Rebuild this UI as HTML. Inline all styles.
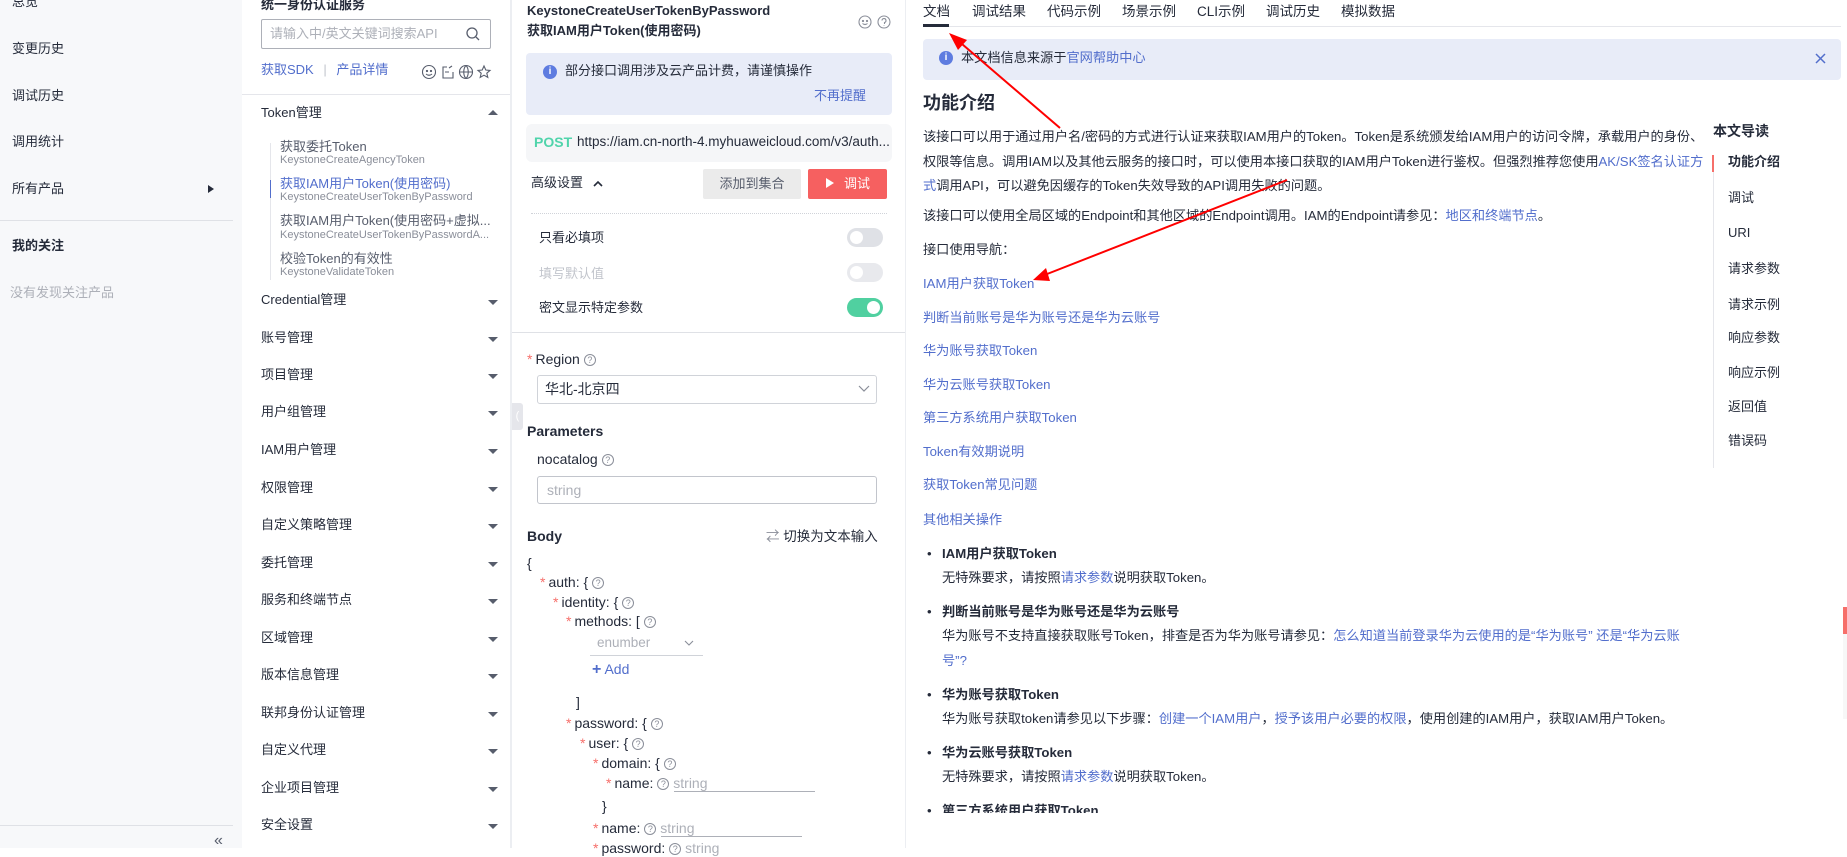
<!DOCTYPE html>
<html><head><meta charset="utf-8">
<style>
*{margin:0;padding:0;box-sizing:border-box}
body{width:1847px;height:848px;overflow:hidden;position:relative;background:#fff;font-family:"Liberation Sans","Noto Sans CJK SC",sans-serif;font-size:13px;color:#252b3a;line-height:18px}
.a{position:absolute;white-space:nowrap}
.b{color:#526ecc}
.g{color:#8a8e99}
.d{font-size:13.2px}
.tri{position:absolute;width:0;height:0;border-left:5px solid transparent;border-right:5px solid transparent;border-top:5px solid #575d6c}
.q{display:inline-block;width:12px;height:12px;border:1px solid #8a8e99;border-radius:50%;font-size:9px;line-height:10px;text-align:center;color:#8a8e99;vertical-align:middle;margin-left:4px}
.st{color:#f66f6a;margin-right:3px}
.tog{position:absolute;width:36px;height:19px;border-radius:10px;background:#dfe1e6}
.tog i{position:absolute;top:3px;left:3px;width:13px;height:13px;border-radius:50%;background:#fff}
</style></head><body>

<!-- left nav -->
<div class="a" style="left:0;top:0;width:242px;height:848px;background:#f7f8fa"></div>
<div class="a" style="left:12px;top:-7px">总览</div>
<div class="a" style="left:12px;top:40px">变更历史</div>
<div class="a" style="left:12px;top:87px">调试历史</div>
<div class="a" style="left:12px;top:133px">调用统计</div>
<div class="a" style="left:12px;top:180px">所有产品</div>
<div class="a" style="left:208px;top:185px;width:0;height:0;border-top:4px solid transparent;border-bottom:4px solid transparent;border-left:6px solid #252b3a"></div>
<div class="a" style="left:0;top:220px;width:233px;height:1px;background:#dfe1e6"></div>
<div class="a" style="left:12px;top:237px;font-weight:bold">我的关注</div>
<div class="a g" style="left:10px;top:284px;color:#adb0b8">没有发现关注产品</div>
<div class="a" style="left:0;top:825px;width:233px;height:1px;background:#dfe1e6"></div>
<div class="a" style="left:214px;top:832px;color:#575d6c;font-size:16px">«</div>

<!-- product column -->
<div class="a" style="left:261px;top:-4px;font-weight:bold">统一身份认证服务</div>
<div class="a" style="left:261px;top:19px;width:230px;height:30px;border:1px solid #adb0b8;border-radius:2px"></div>
<div class="a" style="left:270px;top:25px;color:#adb0b8">请输入中/英文关键词搜索API</div>
<svg class="a" style="left:466px;top:27px" width="14" height="14"><circle cx="6" cy="6" r="5" fill="none" stroke="#575d6c" stroke-width="1.3"/><line x1="10" y1="10" x2="13" y2="13" stroke="#575d6c" stroke-width="1.3"/></svg>
<div class="a b" style="left:261px;top:61px">获取SDK <span style="color:#c0c4cc;margin:0 6px">|</span> 产品详情</div>
<svg class="a" style="left:421px;top:64px" width="72" height="16" fill="none" stroke="#575d6c" stroke-width="1.1"><circle cx="8" cy="8" r="6.5"/><circle cx="6" cy="7" r=".6"/><circle cx="10" cy="7" r=".6"/><path d="M5 10q3 2.5 6 0"/><path d="M26 3h-4v11h10v-6M24 8h4M28 4l3-2"/><circle cx="45" cy="8" r="6.5"/><path d="M38.5 8h13M45 1.5c-3 3-3 10 0 13M45 1.5c3 3 3 10 0 13"/><path d="M63 2l1.8 4 4.2.4-3.2 2.8 1 4.2-3.8-2.2-3.8 2.2 1-4.2-3.2-2.8 4.2-.4z"/></svg>
<div class="a" style="left:242px;top:94px;width:268px;height:1px;background:#e5e6eb"></div>
<div class="a" style="left:261px;top:104px">Token管理</div>
<div class="a" style="left:488px;top:110px;width:0;height:0;border-left:5px solid transparent;border-right:5px solid transparent;border-bottom:5px solid #575d6c"></div>
<div class="a" style="left:270px;top:143px;width:1px;height:137px;background:#e5e6eb"></div>
<div class="a" style="left:270px;top:180px;width:1px;height:18px;background:#526ecc"></div>
<div class="a" style="left:280px;top:138px;color:#575d6c">获取委托Token</div>
<div class="a g" style="left:280px;top:153px;font-size:11px;line-height:14px">KeystoneCreateAgencyToken</div>
<div class="a b" style="left:280px;top:175px">获取IAM用户Token(使用密码)</div>
<div class="a g" style="left:280px;top:190px;font-size:11px;line-height:14px">KeystoneCreateUserTokenByPassword</div>
<div class="a" style="left:280px;top:212px;color:#575d6c">获取IAM用户Token(使用密码+虚拟...</div>
<div class="a g" style="left:280px;top:228px;font-size:11px;line-height:14px">KeystoneCreateUserTokenByPasswordA...</div>
<div class="a" style="left:280px;top:250px;color:#575d6c">校验Token的有效性</div>
<div class="a g" style="left:280px;top:265px;font-size:11px;line-height:14px">KeystoneValidateToken</div>

<div class="a" style="left:261px;top:291px">Credential管理</div><div class="tri" style="left:488px;top:300px"></div>
<div class="a" style="left:261px;top:329px">账号管理</div><div class="tri" style="left:488px;top:337px"></div>
<div class="a" style="left:261px;top:366px">项目管理</div><div class="tri" style="left:488px;top:374px"></div>
<div class="a" style="left:261px;top:403px">用户组管理</div><div class="tri" style="left:488px;top:411px"></div>
<div class="a" style="left:261px;top:441px">IAM用户管理</div><div class="tri" style="left:488px;top:449px"></div>
<div class="a" style="left:261px;top:479px">权限管理</div><div class="tri" style="left:488px;top:487px"></div>
<div class="a" style="left:261px;top:516px">自定义策略管理</div><div class="tri" style="left:488px;top:524px"></div>
<div class="a" style="left:261px;top:554px">委托管理</div><div class="tri" style="left:488px;top:562px"></div>
<div class="a" style="left:261px;top:591px">服务和终端节点</div><div class="tri" style="left:488px;top:599px"></div>
<div class="a" style="left:261px;top:629px">区域管理</div><div class="tri" style="left:488px;top:637px"></div>
<div class="a" style="left:261px;top:666px">版本信息管理</div><div class="tri" style="left:488px;top:674px"></div>
<div class="a" style="left:261px;top:704px">联邦身份认证管理</div><div class="tri" style="left:488px;top:712px"></div>
<div class="a" style="left:261px;top:741px">自定义代理</div><div class="tri" style="left:488px;top:749px"></div>
<div class="a" style="left:261px;top:779px">企业项目管理</div><div class="tri" style="left:488px;top:787px"></div>
<div class="a" style="left:261px;top:816px">安全设置</div><div class="tri" style="left:488px;top:824px"></div>

<div class="a" style="left:510px;top:0;width:2px;height:848px;background:#eceef2"></div>
<div class="a" style="left:905px;top:0;width:1px;height:848px;background:#eceef2"></div>

<!-- middle -->
<div class="a" style="left:527px;top:2px;font-weight:bold">KeystoneCreateUserTokenByPassword</div>
<div class="a" style="left:527px;top:22px;font-weight:bold">获取IAM用户Token(使用密码)</div>
<svg class="a" style="left:858px;top:15px" width="34" height="14" fill="none" stroke="#8a8e99" stroke-width="1.1"><circle cx="7" cy="7" r="6"/><circle cx="5" cy="6" r=".6"/><circle cx="9" cy="6" r=".6"/><path d="M4.5 8.5q2.5 2 5 0"/><circle cx="26" cy="7" r="6"/><path d="M24 5.5a2 2 0 1 1 2.5 2v1.5M26 10.5v.5"/></svg>
<div class="a" style="left:526px;top:53px;width:366px;height:62px;background:#e8ecf8;border-radius:4px"></div>
<div class="a" style="left:543px;top:65px;width:14px;height:14px;border-radius:50%;background:#5e7ce0;color:#fff;font-size:10px;line-height:14px;text-align:center;font-weight:bold">i</div>
<div class="a" style="left:565px;top:62px">部分接口调用涉及云产品计费，请谨慎操作</div>
<div class="a b" style="left:814px;top:87px">不再提醒</div>
<div class="a" style="left:526px;top:124px;width:366px;height:38px;background:#f5f6f8;border-radius:6px"></div>
<div class="a" style="left:534px;top:133px;color:#50d4ab;font-weight:bold;font-size:14px">POST</div>
<div class="a" style="left:577px;top:133px;font-size:13.5px">https://iam.cn-north-4.myhuaweicloud.com/v3/auth...</div>
<div class="a" style="left:531px;top:174px">高级设置</div>
<svg class="a" style="left:592px;top:179px" width="12" height="10"><path d="M2 7l4-4 4 4" fill="none" stroke="#252b3a" stroke-width="1.6"/></svg>
<div class="a" style="left:703px;top:169px;width:98px;height:30px;background:#ebebeb;border-radius:2px;text-align:center;line-height:30px;color:#575d6c">添加到集合</div>
<div class="a" style="left:808px;top:169px;width:79px;height:30px;background:#f66060;border-radius:2px;color:#fff;line-height:30px;padding-left:18px"><span style="display:inline-block;width:0;height:0;border-top:5px solid transparent;border-bottom:5px solid transparent;border-left:8px solid #fff;margin-right:10px"></span>调试</div>
<div class="a" style="left:531px;top:213px;width:356px;border-top:1px dotted #d0d3d9"></div>
<div class="a" style="left:539px;top:229px">只看必填项</div>
<div class="tog" style="left:847px;top:228px"><i></i></div>
<div class="a" style="left:539px;top:265px;color:#c2c5cc">填写默认值</div>
<div class="tog" style="left:847px;top:263px;background:#e8e9ed"><i></i></div>
<div class="a" style="left:539px;top:299px">密文显示特定参数</div>
<div class="tog" style="left:847px;top:298px;background:#50d0a0"><i style="left:20px"></i></div>
<div class="a" style="left:512px;top:332px;width:393px;height:1px;background:#dfe1e6"></div>
<div class="a" style="left:527px;top:350px;font-size:14px"><span class="st">*</span>Region<span class="q">?</span></div>
<div class="a" style="left:537px;top:375px;width:340px;height:29px;border:1px solid #d0d3d9;border-radius:3px"></div>
<div class="a" style="left:545px;top:380px;font-size:14px">华北-北京四</div>
<svg class="a" style="left:858px;top:385px" width="12" height="8"><path d="M1 1l5 5 5-5" fill="none" stroke="#8a8e99" stroke-width="1.2"/></svg>
<div class="a" style="left:512px;top:403px;width:11px;height:27px;background:#e5e6eb;border-radius:0 3px 3px 0;color:#fff;font-size:11px;line-height:27px;text-align:center">(</div>
<div class="a" style="left:527px;top:422px;font-weight:bold;font-size:14px">Parameters</div>
<div class="a" style="left:537px;top:450px;font-size:14px">nocatalog<span class="q">?</span></div>
<div class="a" style="left:537px;top:476px;width:340px;height:28px;border:1px solid #c2c5cc;border-radius:3px"></div>
<div class="a" style="left:547px;top:481px;color:#adb0b8;font-size:14px">string</div>
<div class="a" style="left:527px;top:527px;font-weight:bold;font-size:14px">Body</div>
<div class="a" style="left:766px;top:528px;font-size:13.5px"><span style="color:#8a8e99">⇄</span> 切换为文本输入</div>
<div class="a" style="left:527px;top:554px;font-size:14px">{</div>
<div class="a" style="left:540px;top:573px;font-size:14px"><span class="st">*</span>auth: {<span class="q">?</span></div>
<div class="a" style="left:553px;top:593px;font-size:14px"><span class="st">*</span>identity: {<span class="q">?</span></div>
<div class="a" style="left:566px;top:612px;font-size:14px"><span class="st">*</span>methods: [<span class="q">?</span></div>
<div class="a" style="left:597px;top:634px;color:#adb0b8;font-size:13.5px">enumber</div>
<svg class="a" style="left:684px;top:640px" width="10" height="7"><path d="M1 1l4 4 4-4" fill="none" stroke="#8a8e99" stroke-width="1.1"/></svg>
<div class="a" style="left:590px;top:655px;width:113px;height:1px;background:#d0d3d9"></div>
<div class="a b" style="left:592px;top:660px;font-size:14px"><b style="font-size:16px">+</b> Add</div>
<div class="a" style="left:576px;top:693px;font-size:14px">]</div>
<div class="a" style="left:566px;top:714px;font-size:14px"><span class="st">*</span>password: {<span class="q">?</span></div>
<div class="a" style="left:580px;top:734px;font-size:14px"><span class="st">*</span>user: {<span class="q">?</span></div>
<div class="a" style="left:593px;top:754px;font-size:14px"><span class="st">*</span>domain: {<span class="q">?</span></div>
<div class="a" style="left:606px;top:774px;font-size:14px"><span class="st">*</span>name:<span class="q">?</span> <span style="color:#adb0b8">string</span></div>
<div class="a" style="left:674px;top:791px;width:141px;height:1px;background:#adb0b8"></div>
<div class="a" style="left:602px;top:797px;font-size:14px">}</div>
<div class="a" style="left:593px;top:819px;font-size:14px"><span class="st">*</span>name:<span class="q">?</span> <span style="color:#adb0b8">string</span></div>
<div class="a" style="left:661px;top:836px;width:141px;height:1px;background:#adb0b8"></div>
<div class="a" style="left:593px;top:839px;font-size:14px"><span class="st">*</span>password:<span class="q">?</span> <span style="color:#adb0b8">string</span></div>

<!-- right doc -->
<div class="a" style="left:923px;top:3px;font-size:13.5px">文档</div>
<div class="a" style="left:972px;top:3px;font-size:13.5px">调试结果</div>
<div class="a" style="left:1047px;top:3px;font-size:13.5px">代码示例</div>
<div class="a" style="left:1122px;top:3px;font-size:13.5px">场景示例</div>
<div class="a" style="left:1197px;top:3px;font-size:13.5px">CLI示例</div>
<div class="a" style="left:1266px;top:3px;font-size:13.5px">调试历史</div>
<div class="a" style="left:1341px;top:3px;font-size:13.5px">模拟数据</div>
<div class="a" style="left:923px;top:26px;width:918px;height:1px;background:#e5e6eb"></div>
<div class="a" style="left:923px;top:24px;width:26px;height:3px;background:#252b3a"></div>
<div class="a" style="left:923px;top:39px;width:918px;height:41px;background:#e8ecf8;border-radius:4px"></div>
<div class="a" style="left:939px;top:51px;width:14px;height:14px;border-radius:50%;background:#5e7ce0;color:#fff;font-size:10px;line-height:14px;text-align:center;font-weight:bold">i</div>
<div class="a d" style="left:961px;top:49px">本文档信息来源于<span class="b">官网帮助中心</span></div>
<svg class="a" style="left:1815px;top:53px" width="11" height="11"><path d="M1 1l9 9M10 1l-9 9" stroke="#526ecc" stroke-width="1.5"/></svg>
<div class="a" style="left:923px;top:92px;font-size:18px;font-weight:bold;line-height:22px">功能介绍</div>
<div class="a d" style="left:923px;top:125px;line-height:24.5px">该接口可以用于通过用户名/密码的方式进行认证来获取IAM用户的Token。Token是系统颁发给IAM用户的访问令牌，承载用户的身份、<br>权限等信息。调用IAM以及其他云服务的接口时，可以使用本接口获取的IAM用户Token进行鉴权。但强烈推荐您使用<span class="b">AK/SK签名认证方</span><br><span class="b">式</span>调用API，可以避免因缓存的Token失效导致的API调用失败的问题。</div>
<div class="a d" style="left:923px;top:207px">该接口可以使用全局区域的Endpoint和其他区域的Endpoint调用。IAM的Endpoint请参见：<span class="b">地区和终端节点</span>。</div>
<div class="a d" style="left:923px;top:241px">接口使用导航：</div>
<div class="a b d" style="left:923px;top:275px">IAM用户获取Token</div>
<div class="a b d" style="left:923px;top:309px">判断当前账号是华为账号还是华为云账号</div>
<div class="a b d" style="left:923px;top:342px">华为账号获取Token</div>
<div class="a b d" style="left:923px;top:376px">华为云账号获取Token</div>
<div class="a b d" style="left:923px;top:409px">第三方系统用户获取Token</div>
<div class="a b d" style="left:923px;top:443px">Token有效期说明</div>
<div class="a b d" style="left:923px;top:476px">获取Token常见问题</div>
<div class="a b d" style="left:923px;top:511px">其他相关操作</div>
<div class="d" style="position:absolute;left:923px;top:0;width:800px;height:813px;overflow:hidden">
<div class="a" style="left:4px;top:545px">•</div><div class="a" style="left:19px;top:545px;font-weight:bold">IAM用户获取Token</div>
<div class="a" style="left:19px;top:569px">无特殊要求，请按照<span class="b">请求参数</span>说明获取Token。</div>
<div class="a" style="left:4px;top:603px">•</div><div class="a" style="left:19px;top:603px;font-weight:bold">判断当前账号是华为账号还是华为云账号</div>
<div class="a" style="left:19px;top:627px">华为账号不支持直接获取账号Token，排查是否为华为账号请参见：<span class="b">怎么知道当前登录华为云使用的是“华为账号” 还是“华为云账</span></div>
<div class="a b" style="left:19px;top:652px">号”?</div>
<div class="a" style="left:4px;top:686px">•</div><div class="a" style="left:19px;top:686px;font-weight:bold">华为账号获取Token</div>
<div class="a" style="left:19px;top:710px">华为账号获取token请参见以下步骤：<span class="b">创建一个IAM用户</span>，<span class="b">授予该用户必要的权限</span>，使用创建的IAM用户，获取IAM用户Token。</div>
<div class="a" style="left:4px;top:744px">•</div><div class="a" style="left:19px;top:744px;font-weight:bold">华为云账号获取Token</div>
<div class="a" style="left:19px;top:768px">无特殊要求，请按照<span class="b">请求参数</span>说明获取Token。</div>
<div class="a" style="left:4px;top:802px">•</div><div class="a" style="left:19px;top:802px;font-weight:bold">第三方系统用户获取Token</div>
</div>

<!-- TOC -->
<div class="a" style="left:1713px;top:122px;font-size:14px;font-weight:bold">本文导读</div>
<div class="a" style="left:1713px;top:155px;width:1px;height:313px;background:#e5e6eb"></div>
<div class="a" style="left:1712px;top:155px;width:2px;height:17px;background:#f66f6a"></div>
<div class="a" style="left:1728px;top:153px;font-weight:bold">功能介绍</div>
<div class="a" style="left:1728px;top:189px">调试</div>
<div class="a" style="left:1728px;top:224px">URI</div>
<div class="a" style="left:1728px;top:260px">请求参数</div>
<div class="a" style="left:1728px;top:296px">请求示例</div>
<div class="a" style="left:1728px;top:329px">响应参数</div>
<div class="a" style="left:1728px;top:364px">响应示例</div>
<div class="a" style="left:1728px;top:398px">返回值</div>
<div class="a" style="left:1728px;top:432px">错误码</div>
<div class="a" style="left:1843px;top:607px;width:4px;height:27px;background:#f66f6a"></div>
<div class="a" style="left:1843px;top:634px;width:4px;height:85px;background:#f7f7f7"></div>

<!-- red arrows -->
<svg class="a" style="left:0;top:0" width="1847" height="848">
<g stroke="#f00" stroke-width="2" fill="#f00">
<line x1="1060" y1="128" x2="955" y2="38"/>
<polygon points="949,33 967,40 958,50" stroke="none"/>
<line x1="1287" y1="180" x2="1042" y2="276"/>
<polygon points="1033,280 1046,268 1050,281" stroke="none"/>
</g></svg>
</body></html>
